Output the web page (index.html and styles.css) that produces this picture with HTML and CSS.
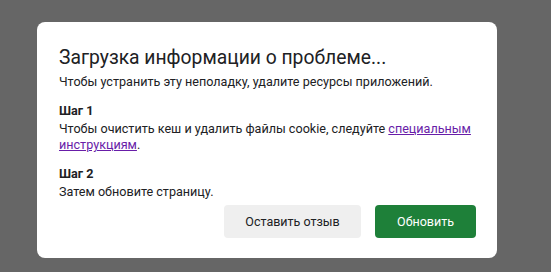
FILE: index.html
```html
<!DOCTYPE html>
<html lang="ru">
<head>
  <meta charset="UTF-8" />
  <title>Загрузка информации о проблеме</title>
  <link rel="stylesheet" href="styles.css">
</head>
<body>

  <div class="dialog">
    <h2 class="title">Загрузка информации о проблеме...</h2>
    <p class="intro">Чтобы устранить эту неполадку, удалите ресурсы приложений.</p>

    <!-- Steps -->
    <div class="step">
      <h3>Шаг 1</h3>
      <p>Чтобы очистить кеш и удалить файлы cookie, следуйте <a href="#">специальным инструкциям</a>.</p>
    </div>
    <div class="step">
      <h3>Шаг 2</h3>
      <p>Затем обновите страницу.</p>
    </div>

    <div class="actions">
      <button class="secondary">Оставить отзыв</button>
      <button class="primary">Обновить</button>
    </div>
  </div>

</body>
</html>
```

FILE: styles.css
```css
body {
  margin: 0;
  height: 272px;
  background-color: #666;
  font-family: Roboto, "Liberation Sans", sans-serif;
  color: #202124;
}

.dialog {
  box-sizing: border-box;
  width: 460px;
  height: 236px;
  margin: 22px 0 0 37px;
  padding: 24px 21px 20px 22px;
  background-color: #fff;
  border-radius: 8px;
}

.title {
  margin: 0;
  font-size: 19.3px;
  line-height: 24px;
  font-weight: 400;
}

.intro {
  margin: 4px 0 0;
  font-size: 12.6px;
  line-height: 16px;
}

.step {
  margin-top: 13px;
}

.step h3 {
  margin: 0;
  font-size: 12.6px;
  line-height: 16px;
  font-weight: 700;
}

.step p {
  margin: 2px 0 0;
  font-size: 12.6px;
  line-height: 16px;
}

.step a {
  color: #681da8;
}

.actions {
  display: flex;
  justify-content: flex-end;
  gap: 14px;
  margin-top: 5px;
}

button {
  height: 33px;
  border: none;
  border-radius: 4px;
  font-family: Roboto, "Liberation Sans", sans-serif;
  font-size: 12.5px;
  cursor: pointer;
}

.secondary {
  width: 137px;
  background-color: #efefef;
  color: #202124;
}

.primary {
  width: 101px;
  background-color: #1e8039;
  color: #fff;
}
```
